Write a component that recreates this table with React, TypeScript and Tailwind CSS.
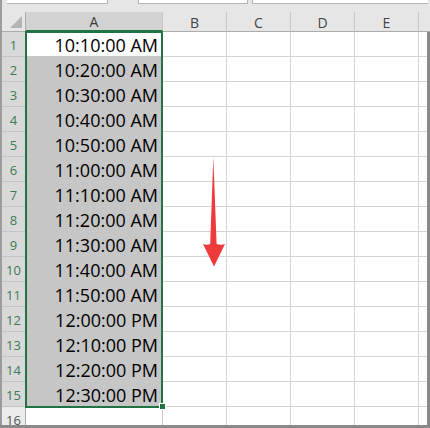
const times = [
  "10:10:00 AM",
  "10:20:00 AM",
  "10:30:00 AM",
  "10:40:00 AM",
  "10:50:00 AM",
  "11:00:00 AM",
  "11:10:00 AM",
  "11:20:00 AM",
  "11:30:00 AM",
  "11:40:00 AM",
  "11:50:00 AM",
  "12:00:00 PM",
  "12:10:00 PM",
  "12:20:00 PM",
  "12:30:00 PM",
  "",
];

const cols = ["B", "C", "D", "E"];

const font = { fontFamily: '"Open Sans", "Noto Sans", sans-serif' };

const App = () => {
  return (
    <div
      className="relative flex h-[428px] w-[430px] flex-col overflow-hidden bg-white"
      style={font}
    >
      {/* formula bar edge */}
      <div className="flex h-[12px] shrink-0 bg-[#e6e6e6]">
        <div className="w-[2px] bg-[#9c9c9c]" />
        <div className="ml-[5px] h-[4px] w-[101px] border-b border-r border-[#b4b4b4] bg-white" />
        <div className="ml-[30px] h-[4px] w-[110px] border-b border-l border-r border-[#b4b4b4] bg-white" />
        <div className="ml-[4px] h-[4px] w-[176px] border-b border-l border-[#b4b4b4] bg-white" />
      </div>

      {/* column headers */}
      <div className="flex h-[20px] shrink-0 bg-[#e6e6e6] text-[14px] text-[#444]">
        <div className="w-[2px] bg-[#9c9c9c]" />
        <div className="relative w-[24px] border-b border-r border-[#ababab]">
          <div className="absolute bottom-[3px] right-[3px] h-0 w-0 border-b-[12px] border-l-[12px] border-b-[#b4b4b4] border-l-transparent" />
        </div>
        <div className="flex w-[137px] items-center justify-center border-b-2 border-r border-b-[#217346] border-r-[#c6c6c6] bg-[#d2d2d2] pt-[1px] text-[#3c3c3c]">
          A
        </div>
        {cols.map((c) => (
          <div
            key={c}
            className="flex w-[64px] items-center justify-center border-b border-r border-b-[#ababab] border-r-[#c6c6c6] pt-[1px]"
          >
            {c}
          </div>
        ))}
        <div className="flex-1 border-b border-[#ababab]" />
      </div>

      {/* rows */}
      <div className="flex min-h-0 flex-1">
        <div className="w-[2px] bg-[#9c9c9c]" />
        <div className="flex flex-1 flex-col">
          {times.map((t, i) => {
            const sel = i < 15;
            return (
              <div key={i} className="flex h-[25px] shrink-0">
                <div
                  className={`flex w-[24px] items-center justify-center border-b border-r pt-[3px] text-[13px] ${
                    sel
                      ? "border-b-[#c4c4c4] border-r-[#217346] bg-[#d9d9d9] text-[#3f7a54]"
                      : "border-b-[#c4c4c4] border-r-[#ababab] bg-[#ececec] text-[#555]"
                  }`}
                >
                  {i + 1}
                </div>
                <div
                  className={`w-[137px] border-b border-r border-[#c8c8c8] pr-[4px] pt-[3px] text-right text-[18px] leading-[21px] text-black ${
                    i === 0 ? "bg-white" : sel ? "bg-[#c6c6c6]" : "bg-white"
                  }`}
                >
                  {t}
                </div>
                {cols.map((c) => (
                  <div
                    key={c}
                    className="w-[64px] border-b border-r border-[#d4d4d4]"
                  />
                ))}
                <div className="flex-1 border-b border-[#d4d4d4]" />
              </div>
            );
          })}
        </div>
        <div className="w-[3px] bg-[#8a8a8a]" />
      </div>
      <div className="h-[3px] shrink-0 bg-[#8a8a8a]" />

      {/* selection outline */}
      <div className="pointer-events-none absolute left-[25px] top-[31px] h-[377px] w-[138px] border-2 border-[#217346]" />
      <div className="absolute left-[159px] top-[403px] h-[7px] w-[7px] border border-white bg-[#217346]" />

      {/* red arrow */}
      <svg
        className="absolute left-0 top-0"
        width="430"
        height="428"
        viewBox="0 0 430 428"
      >
        <path
          d="M213.3 157 L216.6 244 Q221 245.5 225 244 L214 266.5 L203 244 Q207 245.5 210.2 244 Z"
          fill="#ef3a3c"
        />
      </svg>
    </div>
  );
};

export default App;
